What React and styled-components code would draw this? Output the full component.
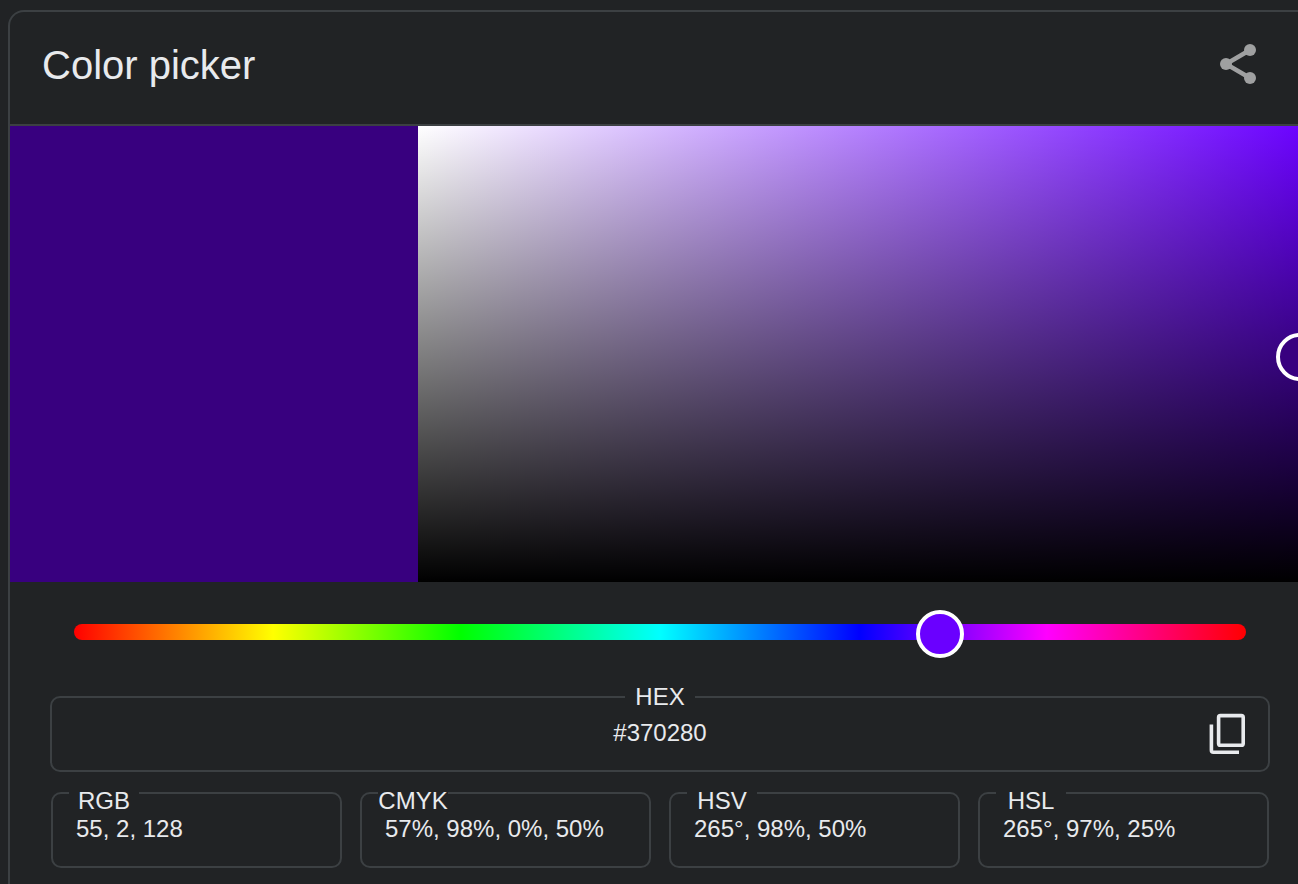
import React, { useState } from "react";
import styled, { createGlobalStyle } from "styled-components";

const color = {
  surface: "#212325",
  line: "#3c4043",
  text: "#e8eaed",
  icon: "#9fa0a1",
  picked: "#38007f",
  hue: "#6a00ff",
};

const GlobalStyle = createGlobalStyle`
  *, *::before, *::after {
    box-sizing: border-box;
  }
  body {
    margin: 0;
    overflow: hidden;
    background: ${color.surface};
    color: ${color.text};
    font-family: "Liberation Sans", Arial, sans-serif;
  }
`;

const Page = styled.main`
  display: flex;
  min-height: 100vh;
  padding: 10px 0 0 8px;
`;

const Card = styled.section`
  flex: none;
  width: calc(100% + 14px);
  border: 2px solid ${color.line};
  border-bottom: 0;
  border-radius: 16px 0 0 0;
  overflow: hidden;
`;

const Header = styled.header`
  display: flex;
  align-items: center;
  justify-content: space-between;
  height: 114px;
  padding: 0 54px 8px 32px;
  border-bottom: 2px solid ${color.line};
`;

const Title = styled.h1`
  margin: 0;
  padding-top: 2px;
  font-size: 40px;
  font-weight: 400;
  line-height: 48px;
`;

const IconButton = styled.button`
  display: flex;
  padding: 0;
  border: 0;
  background: none;
  color: ${(p) => p.$tint};
  cursor: pointer;
`;

const Preview = styled.div`
  display: flex;
  height: 456px;
`;

const Swatch = styled.div`
  flex: 0 0 408px;
  background: ${color.picked};
`;

const Spectrum = styled.div`
  position: relative;
  flex: 1;
  background:
    linear-gradient(to top, #000, transparent),
    linear-gradient(to right, #fff, ${color.hue});
`;

const Marker = styled.span`
  position: absolute;
  width: 48px;
  height: 48px;
  border: 4px solid #fff;
  border-radius: 50%;
  background: ${color.picked};
  transform: translate(-50%, -50%);
`;

const HueTrack = styled.div`
  display: flex;
  align-items: flex-start;
  height: 16px;
  margin: 42px 64px 56px;
  border-radius: 8px;
  background: linear-gradient(
    to right,
    #f00 0%,
    #ff0 17%,
    #0f0 33%,
    #0ff 50%,
    #00f 67%,
    #f0f 83%,
    #f00 100%
  );
`;

const HueSlider = styled.input`
  appearance: none;
  flex: 1;
  height: 48px;
  margin: -14px -24px 0;
  background: transparent;
  cursor: pointer;

  &::-webkit-slider-thumb {
    appearance: none;
    width: 48px;
    height: 48px;
    border: 4px solid #fff;
    border-radius: 50%;
    background: ${color.hue};
  }
`;

const Values = styled.div`
  display: flex;
  flex-direction: column;
  gap: 20px;
  padding: 0 40px 16px;
`;

const ValueRow = styled.div`
  display: grid;
  grid-template-columns: repeat(4, 1fr);
  gap: 18px;
  padding: 0 1px;
`;

const Field = styled.div`
  position: relative;
  display: flex;
  align-items: flex-start;
  height: 76px;
  padding: 21px 23px 0;
  border: 2px solid ${color.line};
  border-radius: 10px;
`;

const FieldLabel = styled.label`
  position: absolute;
  top: ${(p) => (p.$centered ? "-15px" : "-7px")};
  left: ${(p) => (p.$centered ? "calc(50% - 35px)" : "16px")};
  width: 70px;
  background: ${color.surface};
  font-size: 24px;
  line-height: 28px;
  text-align: center;
`;

const FieldInput = styled.input`
  width: 100%;
  height: 28px;
  padding: 0;
  border: 0;
  outline: 0;
  background: none;
  color: inherit;
  font-family: inherit;
  font-size: 24px;
  line-height: 28px;
  text-align: ${(p) => (p.$centered ? "center" : "left")};
`;

const CopySlot = styled.div`
  position: absolute;
  top: 15px;
  right: 22px;
`;

const ShareIcon = () => (
  <svg width="36" height="40" viewBox="0 0 36 40" fill="currentColor" aria-hidden="true">
    <path d="M30 6 6 20l24 14" fill="none" stroke="currentColor" strokeWidth="4.4" />
    <circle cx="30" cy="6" r="6" />
    <circle cx="6" cy="20" r="6" />
    <circle cx="30" cy="34" r="6" />
  </svg>
);

const CopyIcon = () => (
  <svg
    width="38"
    height="42"
    viewBox="0 0 38 42"
    fill="none"
    stroke="currentColor"
    strokeWidth="3.6"
    aria-hidden="true"
  >
    <rect x="10.6" y="2.6" width="24.6" height="29.6" rx="1.8" />
    <path d="M3.4 11.5V37.2a2 2 0 0 0 2 2H31" />
  </svg>
);

const formats = [
  { id: "rgb", label: "RGB", value: "55, 2, 128" },
  { id: "cmyk", label: "CMYK", value: "57%, 98%, 0%, 50%" },
  { id: "hsv", label: "HSV", value: "265°, 98%, 50%" },
  { id: "hsl", label: "HSL", value: "265°, 97%, 25%" },
];

function ColorField({ id, label, value, centered, children }) {
  const [text, setText] = useState(value);
  return (
    <Field>
      <FieldLabel htmlFor={id} $centered={centered}>
        {label}
      </FieldLabel>
      <FieldInput
        id={id}
        type="text"
        value={text}
        onChange={(e) => setText(e.target.value)}
        $centered={centered}
      />
      {children}
    </Field>
  );
}

export default function App() {
  const [hue, setHue] = useState(266);
  const point = { left: "98.9%", top: "50.6%" };

  return (
    <>
      <GlobalStyle />
      <Page>
        <Card>
          <Header>
            <Title>Color picker</Title>
            <IconButton type="button" aria-label="Share" $tint={color.icon}>
              <ShareIcon />
            </IconButton>
          </Header>
          <Preview>
            <Swatch />
            <Spectrum>
              <Marker style={point} />
            </Spectrum>
          </Preview>
          <HueTrack>
            <HueSlider
              type="range"
              min="0"
              max="360"
              value={hue}
              onChange={(e) => setHue(Number(e.target.value))}
              aria-label="Hue"
            />
          </HueTrack>
          <Values>
            <ColorField id="hex" label="HEX" value="#370280" centered>
              <CopySlot>
                <IconButton type="button" aria-label="Copy HEX" $tint={color.text}>
                  <CopyIcon />
                </IconButton>
              </CopySlot>
            </ColorField>
            <ValueRow>
              {formats.map((format) => (
                <ColorField key={format.id} {...format} />
              ))}
            </ValueRow>
          </Values>
        </Card>
      </Page>
    </>
  );
}
